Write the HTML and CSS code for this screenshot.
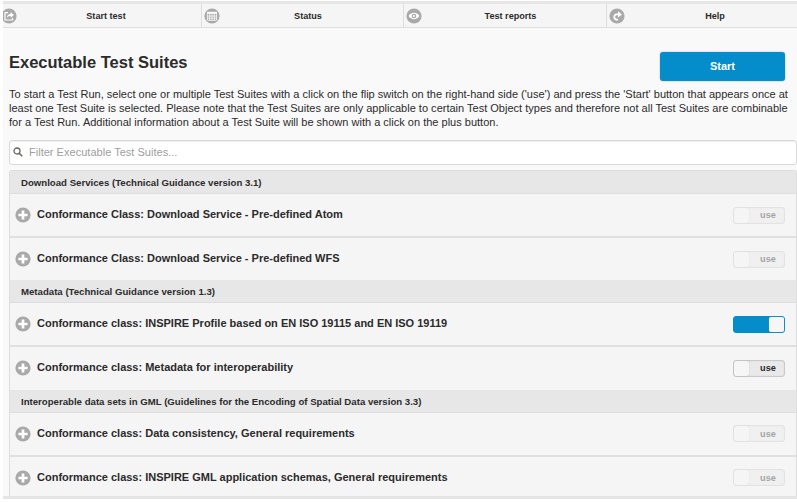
FILE: index.html
```html
<!DOCTYPE html>
<html lang="en">
<head>
<meta charset="utf-8">
<title>Executable Test Suites</title>
<link rel="stylesheet" href="styles.css">
</head>
<body>
<svg width="0" height="0" class="defs">
  <symbol id="plus" viewBox="0 0 16 16"><circle cx="8" cy="8" r="7.6" fill="#a9a9a9"/><path d="M8 3.4v9.2M3.4 8h9.2" stroke="#fff" stroke-width="2.7"/></symbol>
</svg>
<div class="page">
  <nav class="navbar">
    <a class="tab tab-first"><svg class="icon" viewBox="0 0 16 16"><circle cx="8" cy="8" r="7.6" fill="#a9a9a9"/><path d="M7 4.6H4v7.4h7.6V10" fill="none" stroke="#fff" stroke-width="1.2"/><path d="M6 9.7c.1-2.7 1.3-3.8 3.6-3.8V4.1l3.4 2.9-3.4 2.8V8C8 7.900 6.900 8.400 6 9.700z" fill="#fff"/></svg><span>Start test</span></a>
    <a class="tab"><svg class="icon" viewBox="0 0 16 16"><circle cx="8" cy="8" r="7.6" fill="#a9a9a9"/><path d="M3 3.800h10v2H3z" fill="#fff"/><path d="M3.400 6v6.400h9.200V6M3.400 8.100h9.200M3.400 10.200h9.200M5.700 6v6.400M8 6v6.400M10.300 6v6.400" fill="none" stroke="#fff" stroke-width=".75"/></svg><span>Status</span></a>
    <a class="tab"><svg class="icon" viewBox="0 0 16 16"><circle cx="8" cy="8" r="7.6" fill="#a9a9a9"/><path d="M2.600 8C5.300 3.700 10.700 3.700 13.400 8 10.700 12.200 5.300 12.200 2.600 8z" fill="#fff"/><circle cx="8" cy="8" r="2.300" fill="#a9a9a9"/><circle cx="8" cy="8" r="1.100" fill="#fff"/></svg><span>Test reports</span></a>
    <a class="tab"><svg class="icon" viewBox="0 0 16 16"><circle cx="8" cy="8" r="7.6" fill="#a9a9a9"/><path d="M10 6.300H7.600a2.700 2.700 0 0 0-.3 5.300h1.800" fill="none" stroke="#fff" stroke-width="1.700"/><path d="M9 3.200l4 3.200-4 3.200z" fill="#fff"/></svg><span>Help</span></a>
  </nav>
  <main class="content">
    <header class="head"><h1>Executable Test Suites</h1><button class="start">Start</button></header>
    <p class="intro">To start a Test Run, select one or multiple Test Suites with a click on the flip switch on the right-hand side ('use') and press the 'Start' button that appears once at<br>least one Test Suite is selected. Please note that the Test Suites are only applicable to certain Test Object types and therefore not all Test Suites are combinable<br>for a Test Run. Additional information about a Test Suite will be shown with a click on the plus button.</p>
    <div class="filter"><svg class="search" viewBox="0 0 10 10"><circle cx="4" cy="4" r="3" fill="none" stroke="#666" stroke-width="1.300"/><path d="M6.200 6.200L9.200 9.200" stroke="#666" stroke-width="1.600"/></svg><span>Filter Executable Test Suites...</span></div>
    <section class="list">
      <h2>Download Services (Technical Guidance version 3.1)</h2>
      <div class="row"><svg class="icon"><use href="#plus"/></svg><h3>Conformance Class: Download Service - Pre-defined Atom</h3><div class="switch disabled"><i></i><b>use</b></div></div>
      <div class="row"><svg class="icon"><use href="#plus"/></svg><h3>Conformance Class: Download Service - Pre-defined WFS</h3><div class="switch disabled"><i></i><b>use</b></div></div>
      <h2>Metadata (Technical Guidance version 1.3)</h2>
      <div class="row"><svg class="icon"><use href="#plus"/></svg><h3>Conformance class: INSPIRE Profile based on EN ISO 19115 and EN ISO 19119</h3><div class="switch on"><i></i></div></div>
      <div class="row"><svg class="icon"><use href="#plus"/></svg><h3>Conformance class: Metadata for interoperability</h3><div class="switch"><i></i><b>use</b></div></div>
      <h2>Interoperable data sets in GML (Guidelines for the Encoding of Spatial Data version 3.3)</h2>
      <div class="row"><svg class="icon"><use href="#plus"/></svg><h3>Conformance class: Data consistency, General requirements</h3><div class="switch disabled"><i></i><b>use</b></div></div>
      <div class="row"><svg class="icon"><use href="#plus"/></svg><h3>Conformance class: INSPIRE GML application schemas, General requirements</h3><div class="switch disabled"><i></i><b>use</b></div></div>
    </section>
  </main>
</div>
</body>
</html>
```
FILE: styles.css
```css
* { box-sizing: border-box; }
body { margin: 0; background: #fff; color: #2b2b2b; font-family: "Liberation Sans", Arial, sans-serif; overflow: hidden; }
h1, h2, h3, p { margin: 0; }
.defs { position: absolute; }
.page { margin: 1px 0 0 3px; height: 498px; background: #f9f9f9; border-bottom: 3px solid #e4e4e4; overflow: hidden; }
.navbar { display: grid; grid-template-columns: 198px 202px 203px 1fr; height: 27px; border-top: 3px solid #e6e6e6; border-bottom: 1px solid #dedede; background: #f5f5f5; }
.tab { display: flex; align-items: center; border-left: 1px solid #dedede; font-size: 9.1px; font-weight: bold; }
.tab span { flex: 1; text-align: center; margin-left: -7px; }
.tab:last-child span { margin-left: 8px; }
.tab .icon { margin-left: 2px; }
.tab-first { border-left: 0; }
.tab-first .icon { margin-left: -2px; }
.tab-first span { margin-left: -6px; }
.icon { width: 16px; height: 16px; flex: none; }
.content { padding-left: 6px; }
.head { display: flex; justify-content: space-between; height: 58px; padding: 24px 12px 0 0; }
h1 { font-size: 16.5px; line-height: 21px; white-space: nowrap; }
.start { width: 125px; height: 29px; border: 0; border-radius: 3px; background: #058ccb; color: #fff; font: bold 11px "Liberation Sans", Arial, sans-serif; box-shadow: 0 0 2px #a3b8c2; padding: 0 0 1px; }
.intro { height: 54px; font-size: 11.03px; line-height: 14px; padding-top: 1px; white-space: nowrap; }
.filter { display: flex; align-items: center; height: 25px; border: 1px solid #d9d9d9; border-radius: 3px; background: #fff; color: #a0a0a0; font-size: 11.05px; line-height: 13px; padding: 0 0 1px 3px; box-shadow: inset 0 1px 1px #eee; }
.search { width: 10px; height: 10px; margin-right: 6px; }
.list { margin-top: 5px; height: 326px; border: 1px solid #dedede; border-bottom: 0; border-radius: 3px 3px 0 0; background: #f5f5f5; overflow: hidden; }
h2 { height: 23px; line-height: 23px; padding-left: 11px; background: #e7e7e7; border-bottom: 1px solid #dedede; font-size: 9.63px; white-space: nowrap; }
.row { display: flex; align-items: center; height: 42.15px; padding: 0 11px 0 5px; }
.row + .row { height: 44.15px; border-top: 2px solid #e0e0e0; }
h3 { flex: 1; margin-left: 6px; font-size: 11px; line-height: 14px; padding-bottom: 2px; white-space: nowrap; }
.switch { display: flex; width: 52px; height: 17px; border: 1px solid #c9c9c9; border-radius: 3px; background: #e9e9e9; align-items: center; box-shadow: inset 0 0 1px #bbb; }
.switch i { width: 15px; height: 15px; border-radius: 2px; background: #f6f6f6; box-shadow: 0 0 1px #999; }
.switch b { flex: 1; text-align: center; font-size: 9.2px; padding-left: 3px; }
.disabled { opacity: .4; }
.on { background: #058ccb; border-color: #058ccb; justify-content: flex-end; box-shadow: none; }
```
